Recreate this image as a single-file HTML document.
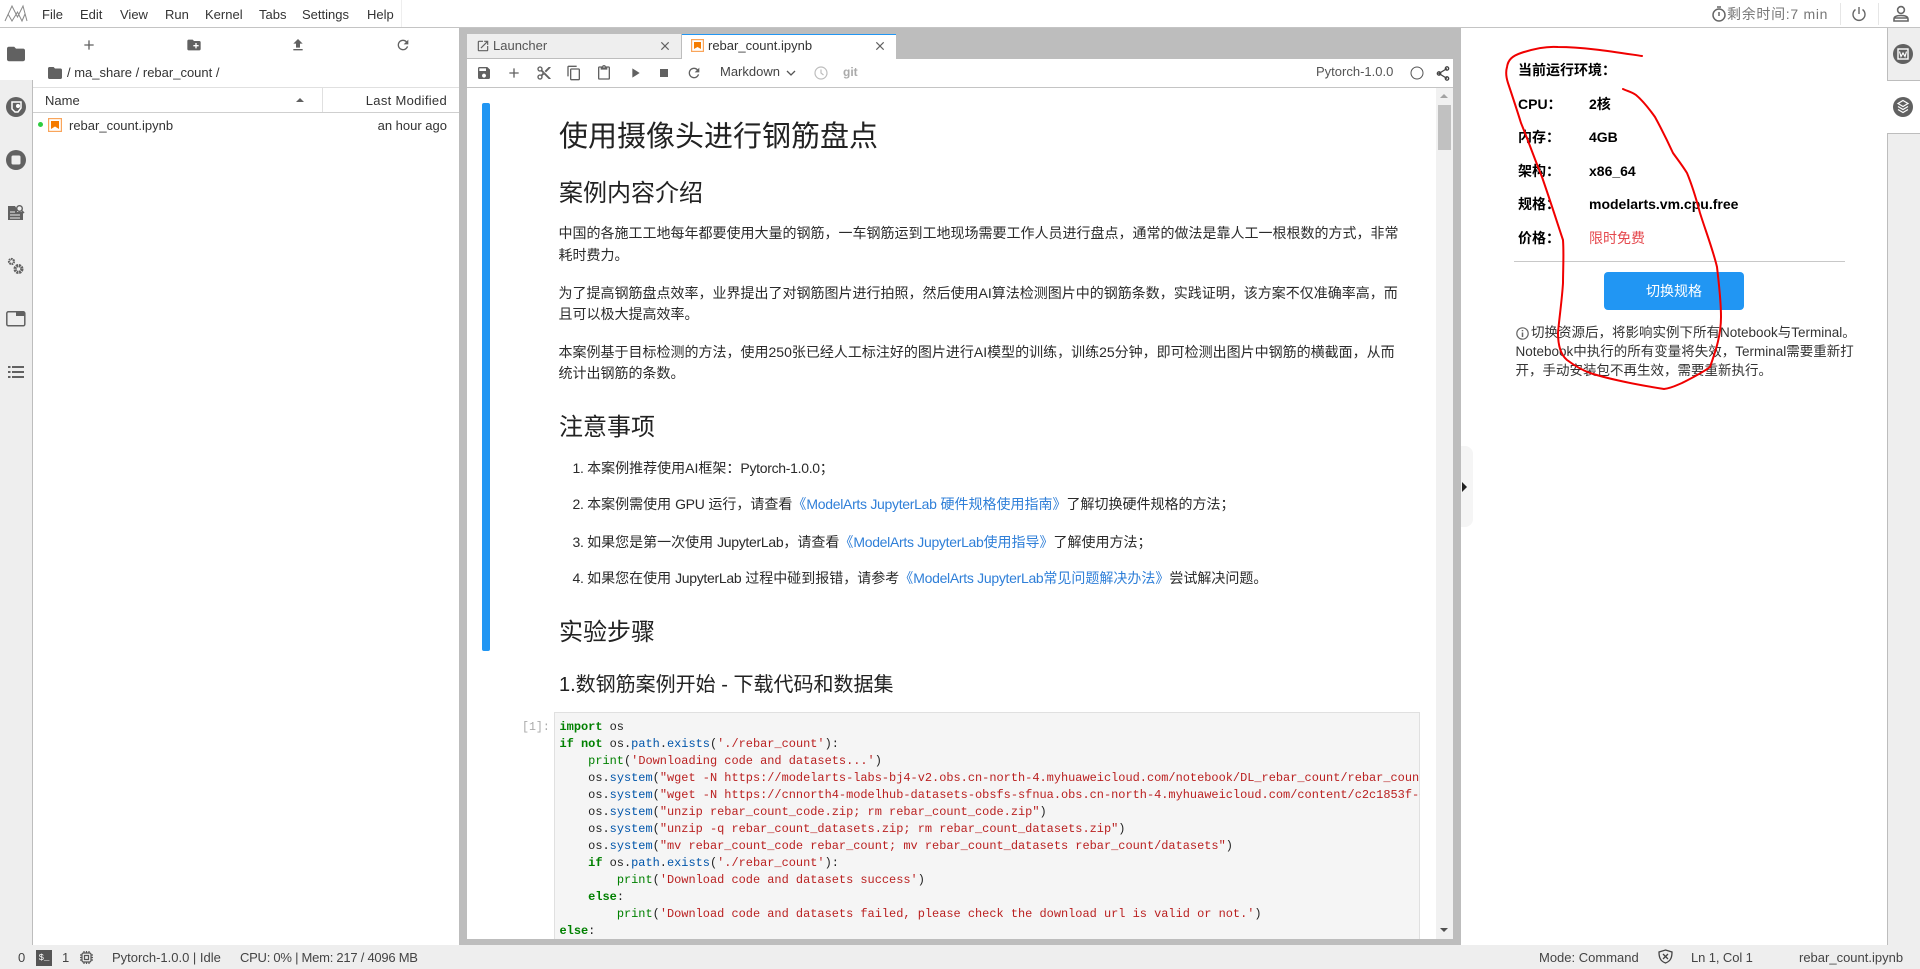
<!DOCTYPE html>
<html lang="zh"><head><meta charset="utf-8"><title>rebar_count.ipynb</title>
<style>
html,body{margin:0;padding:0;width:1920px;height:969px;overflow:hidden;background:#fff}
body{position:relative;font-family:"Liberation Sans","Noto Sans CJK SC",sans-serif;color:#333;font-size:13px}
.b{position:absolute}
.t{position:absolute;white-space:nowrap;line-height:20px;height:20px}
.p{font-size:14px;color:#2a2a2a;left:558.500px}
.h{color:#222;left:559px;line-height:40px;height:40px}
.l{letter-spacing:-.3px}
a{color:#2f7fd8;text-decoration:none}
svg{position:absolute;overflow:visible}
.k{color:#008000;font-weight:bold}.g{color:#008000}.s{color:#ba2121}.u{color:#05a}
pre{position:absolute;margin:0;font:11.95px/17px "Liberation Mono",monospace;color:#222}
</style></head><body>

<!-- top bar -->
<div class="b" style="left:0;top:27px;width:1920px;height:1px;background:#c4c4c4"></div>
<div class="b" style="left:401px;top:0;width:1px;height:27px;background:#eee"></div>
<svg style="left:0;top:0" width="32" height="27" fill="none" stroke="#888" stroke-width="1"><path d="M5 21 12 6 17.500 17 23 6 27 21M8 14 12 21 17.500 12 22 21 25 14"/></svg>
<div class="t" style="left:42px;top:5px">File</div>
<div class="t" style="left:80px;top:5px">Edit</div>
<div class="t" style="left:120px;top:5px">View</div>
<div class="t" style="left:165px;top:5px">Run</div>
<div class="t" style="left:205px;top:5px">Kernel</div>
<div class="t" style="left:259px;top:5px">Tabs</div>
<div class="t" style="left:302px;top:5px">Settings</div>
<div class="t" style="left:367px;top:5px">Help</div>

<svg style="left:1711px;top:5px" width="16" height="18" fill="none" stroke="#666" stroke-width="1.500"><circle cx="8" cy="10" r="6"/><path d="M8 7v4M6 2h4"/></svg>
<div class="t" style="left:1727px;top:4px;font-size:14px;letter-spacing:.7px;color:#777">剩余时间:7 min</div>
<div class="b" style="left:1840px;top:3px;width:1px;height:22px;background:#e6e6e6"></div>
<svg style="left:1851px;top:6px" width="16" height="16" fill="none" stroke="#666" stroke-width="1.400"><path d="M8 1v7M4.500 3.500a6 6 0 1 0 7 0"/></svg>
<div class="b" style="left:1878px;top:3px;width:1px;height:22px;background:#e6e6e6"></div>
<svg style="left:1893px;top:5px" width="16" height="18" fill="none" stroke="#666" stroke-width="1.600"><circle cx="8" cy="5" r="3.400"/><path d="M1 16v-2c0-2 2-3.500 7-3.500s7 1.500 7 3.500v2zM1 13h14"/></svg>

<!-- left sidebar -->
<div class="b" style="left:0;top:80px;width:32px;height:865px;background:#eee"></div>
<div class="b" style="left:32px;top:80px;width:1px;height:865px;background:#bdbdbd"></div>
<svg style="left:7px;top:45px" width="18" height="18" viewBox="2 4 20 16" fill="#616161"><path d="M10 4H4c-1.100 0-1.990.9-1.990 2L2 18c0 1.100.9 2 2 2h16c1.100 0 2-.9 2-2V8c0-1.100-.9-2-2-2h-8l-2-2z"/></svg>
<svg style="left:6px;top:97px" width="20" height="20"><circle cx="10" cy="10" r="10" fill="#616161"/><path d="M6 5h9v6l-3 4H9L6 12z" fill="none" stroke="#fff" stroke-width="1.500"/><circle cx="12" cy="9" r="2" fill="#fff"/></svg>
<svg style="left:6px;top:150px" width="20" height="20"><circle cx="10" cy="10" r="10" fill="#616161"/><rect x="5.500" y="5.500" width="9" height="9" rx="1.500" fill="#eee"/></svg>
<svg style="left:7px;top:204px" width="18" height="18" fill="#616161"><path d="M1 2h7l2 3v3h6v8H1z"/><circle cx="12.500" cy="4.500" r="2.800" fill="#eee" stroke="#616161" stroke-width="1.400"/><path d="M14.500 6.500 17 9" stroke="#616161" stroke-width="1.500"/><path d="M3 8h5M3 11h10M3 14h10" stroke="#eee"/></svg>
<svg style="left:7px;top:257px" width="18" height="19" fill="none" stroke="#616161"><circle cx="4.500" cy="4.500" r="2.500" stroke-width="2.200" stroke-dasharray="1.600 .6"/><circle cx="11.500" cy="12" r="3.400" stroke-width="3.200" stroke-dasharray="2 .7"/></svg>
<svg style="left:6px;top:311px" width="20" height="16" fill="none"><rect x=".8" y=".8" width="18" height="14" rx="1.500" stroke="#616161" stroke-width="1.500"/><rect x="10" y="1" width="9" height="4" fill="#616161"/></svg>
<svg style="left:7px;top:365px" width="18" height="14" fill="#616161"><rect x="1" y="1" width="2.500" height="2"/><rect x="5" y="1" width="12" height="2"/><rect x="1" y="6" width="2.500" height="2"/><rect x="5" y="6" width="12" height="2"/><rect x="1" y="11" width="2.500" height="2"/><rect x="5" y="11" width="12" height="2"/></svg>

<!-- file browser -->
<svg style="left:81px;top:37px" width="16" height="16" viewBox="0 0 24 24" fill="#616161"><path d="M19 13h-6v6h-2v-6H5v-2h6V5h2v6h6v2z"/></svg>
<svg style="left:186px;top:37px" width="16" height="16" viewBox="0 0 24 24" fill="#616161"><path d="M20 6h-8l-2-2H4c-1.110 0-1.990.89-1.990 2L2 18c0 1.110.89 2 2 2h16c1.110 0 2-.89 2-2V8c0-1.110-.89-2-2-2zm-1 8h-3v3h-2v-3h-3v-2h3V9h2v3h3v2z"/></svg>
<svg style="left:290px;top:37px" width="16" height="16" viewBox="0 0 24 24" fill="#616161"><path d="M9 16h6v-6h4l-7-7-7 7h4zm-4 2h14v2H5z"/></svg>
<svg style="left:395px;top:37px" width="16" height="16" viewBox="0 0 24 24" fill="#616161"><path d="M17.650 6.350C16.200 4.900 14.210 4 12 4c-4.420 0-7.990 3.580-7.990 8s3.570 8 7.990 8c3.730 0 6.840-2.550 7.730-6h-2.080c-.82 2.330-3.040 4-5.650 4-3.310 0-6-2.690-6-6s2.690-6 6-6c1.660 0 3.140.69 4.220 1.780L13 11h7V4l-2.350 2.350z"/></svg>
<svg style="left:48px;top:67px" width="14" height="12" viewBox="2 4 20 16" preserveAspectRatio="none" fill="#616161"><path d="M10 4H4c-1.100 0-1.990.9-1.990 2L2 18c0 1.100.9 2 2 2h16c1.100 0 2-.9 2-2V8c0-1.100-.9-2-2-2h-8l-2-2z"/></svg>
<div class="t" style="left:67px;top:63px;font-size:13px">/ ma_share / rebar_count /</div>
<div class="b" style="left:33px;top:87px;width:426px;height:1px;background:#e0e0e0"></div>
<div class="b" style="left:33px;top:112px;width:426px;height:1px;background:#cfcfcf"></div>
<div class="b" style="left:322px;top:88px;width:1px;height:24px;background:#e0e0e0"></div>
<div class="t" style="left:45px;top:91px">Name</div>
<div class="b" style="left:296px;top:98px;border:4.500px solid transparent;border-top:0;border-bottom:4px solid #616161"></div>
<div class="t" style="right:1473px;top:91px;letter-spacing:.3px">Last Modified</div>
<div class="b" style="left:38px;top:122px;width:5px;height:5px;border-radius:50%;background:#2ecc40"></div>
<svg style="left:48px;top:118px" width="14" height="14"><rect x=".6" y=".6" width="12.800" height="12.800" fill="#fff" stroke="#f9a55b" stroke-width="1.200"/><path d="M3 3h8v8L7 8.500 3 11z" fill="#f57c00"/></svg>
<div class="t" style="left:69px;top:116px">rebar_count.ipynb</div>
<div class="t" style="right:1473px;top:116px">an hour ago</div>

<!-- gray work area -->
<div class="b" style="left:459px;top:28px;width:1002px;height:917px;background:#bdbdbd"></div>

<!-- tabs -->
<div class="b" style="left:467px;top:34px;width:214px;height:25px;background:#eee"></div>
<div class="b" style="left:467px;top:58px;width:214px;height:1px;background:#bdbdbd"></div>
<svg style="left:476px;top:39px" width="14" height="14" viewBox="0 0 24 24" fill="#616161"><path d="M19 19H5V5h7V3H5c-1.110 0-2 .9-2 2v14c0 1.100.89 2 2 2h14c1.100 0 2-.9 2-2v-7h-2v7zM14 3v2h3.590l-9.830 9.830 1.410 1.410L19 6.410V10h2V3h-7z"/></svg>
<div class="t" style="left:493px;top:36px;color:#555">Launcher</div>
<svg style="left:658px;top:39px" width="14" height="14" viewBox="0 0 24 24" fill="#616161"><path d="M19 6.410L17.590 5 12 10.590 6.410 5 5 6.410 10.590 12 5 17.590 6.410 19 12 13.410 17.590 19 19 17.590 13.410 12z"/></svg>
<div class="b" style="left:682px;top:34px;width:214px;height:25px;background:#fff;border-top:0"></div>
<div class="b" style="left:682px;top:34px;width:214px;height:1px;background:#2196f3"></div>
<svg style="left:691px;top:39px" width="13" height="13"><rect x=".6" y=".6" width="11.800" height="11.800" fill="#fff" stroke="#f9a55b" stroke-width="1.200"/><path d="M3 3h7v7L6.500 8 3 10z" fill="#f57c00"/></svg>
<div class="t" style="left:708px;top:36px;color:#333">rebar_count.ipynb</div>
<svg style="left:873px;top:39px" width="14" height="14" viewBox="0 0 24 24" fill="#616161"><path d="M19 6.410L17.590 5 12 10.590 6.410 5 5 6.410 10.590 12 5 17.590 6.410 19 12 13.410 17.590 19 19 17.590 13.410 12z"/></svg>

<!-- notebook toolbar -->
<div class="b" style="left:467px;top:59px;width:986px;height:28px;background:#fff"></div>
<div class="b" style="left:467px;top:87px;width:986px;height:1px;background:#c4c4c4"></div>
<svg style="left:476px;top:65px" width="16" height="16" viewBox="0 0 24 24" fill="#616161"><path d="M17 3H5c-1.110 0-2 .9-2 2v14c0 1.100.89 2 2 2h14c1.100 0 2-.9 2-2V7l-4-4zm-5 16c-1.660 0-3-1.340-3-3s1.340-3 3-3 3 1.340 3 3-1.340 3-3 3zm3-10H5V5h10v4z"/></svg>
<svg style="left:506px;top:65px" width="16" height="16" viewBox="0 0 24 24" fill="#616161"><path d="M19 13h-6v6h-2v-6H5v-2h6V5h2v6h6v2z"/></svg>
<svg style="left:536px;top:65px" width="16" height="16" viewBox="0 0 24 24" fill="#616161"><path d="M9.640 7.640c.23-.5.36-1.050.36-1.640 0-2.210-1.790-4-4-4S2 3.790 2 6s1.790 4 4 4c.59 0 1.140-.13 1.640-.36L10 12l-2.360 2.360C7.140 14.130 6.590 14 6 14c-2.210 0-4 1.790-4 4s1.790 4 4 4 4-1.790 4-4c0-.59-.13-1.140-.36-1.640L12 14l7 7h3v-1L9.640 7.640zM6 8c-1.100 0-2-.89-2-2s.9-2 2-2 2 .89 2 2-.9 2-2 2zm0 12c-1.100 0-2-.89-2-2s.9-2 2-2 2 .89 2 2-.9 2-2 2zm6-7.500c-.28 0-.5-.22-.5-.5s.22-.5.5-.5.5.22.5.5-.22.5-.5.5zM19 3l-6 6 2 2 7-7V3h-3z"/></svg>
<svg style="left:566px;top:65px" width="16" height="16" viewBox="0 0 24 24" fill="#616161"><path d="M16 1H4c-1.100 0-2 .9-2 2v14h2V3h12V1zm3 4H8c-1.100 0-2 .9-2 2v14c0 1.100.9 2 2 2h11c1.100 0 2-.9 2-2V7c0-1.100-.9-2-2-2zm0 16H8V7h11v14z"/></svg>
<svg style="left:596px;top:65px" width="16" height="16" viewBox="0 0 24 24" fill="#616161"><path d="M19 2h-4.180C14.400.84 13.300 0 12 0c-1.300 0-2.400.84-2.820 2H5c-1.100 0-2 .9-2 2v16c0 1.100.9 2 2 2h14c1.100 0 2-.9 2-2V4c0-1.100-.9-2-2-2zm-7 0c.55 0 1 .45 1 1s-.45 1-1 1-1-.45-1-1 .45-1 1-1zm7 18H5V4h2v3h10V4h2v16z"/></svg>
<svg style="left:627px;top:65px" width="16" height="16" viewBox="0 0 24 24" fill="#616161"><path d="M8 5v14l11-7z"/></svg>
<svg style="left:656px;top:65px" width="16" height="16" viewBox="0 0 24 24" fill="#616161"><path d="M6 6h12v12H6z"/></svg>
<svg style="left:686px;top:65px" width="16" height="16" viewBox="0 0 24 24" fill="#616161"><path d="M17.650 6.350C16.200 4.900 14.210 4 12 4c-4.420 0-7.990 3.580-7.990 8s3.570 8 7.990 8c3.730 0 6.840-2.550 7.730-6h-2.080c-.82 2.330-3.040 4-5.650 4-3.310 0-6-2.690-6-6s2.690-6 6-6c1.660 0 3.140.69 4.220 1.780L13 11h7V4l-2.350 2.350z"/></svg>
<div class="t" style="left:720px;top:62px;color:#444">Markdown</div>
<svg style="left:786px;top:69px" width="10" height="8" fill="none" stroke="#555" stroke-width="1.300"><path d="M1 2l4 4 4-4"/></svg>
<svg style="left:814px;top:66px" width="14" height="14" fill="none" stroke="#bdbdbd" stroke-width="1.200"><circle cx="7" cy="7" r="6"/><path d="M7 3.500V7l2.500 2"/></svg>
<div class="t" style="left:843px;top:62px;color:#aaa;font-size:12px;font-weight:bold">git</div>
<div class="t" style="left:1316px;top:62px;color:#555">Pytorch-1.0.0</div>
<svg style="left:1410px;top:66px" width="14" height="14" fill="none" stroke="#555" stroke-width="1"><circle cx="7" cy="7" r="6"/></svg>
<svg style="left:1436px;top:66px" width="14" height="15" fill="none" stroke="#444" stroke-width="1.300"><path d="M11 2.500 3 7.500 11 12.500"/><circle cx="11" cy="2.500" r="1.700"/><circle cx="3" cy="7.500" r="1.700"/><circle cx="11" cy="12.500" r="1.700"/></svg>

<!-- notebook content -->
<div class="b" style="left:467px;top:88px;width:986px;height:851px;background:#fff;overflow:hidden">
  <div class="b" style="left:15px;top:15px;width:8px;height:548px;background:#2196f3;border-radius:2px"></div>
  <div class="b" style="left:87px;top:624px;width:866px;height:240px;background:#f5f5f5;border:1px solid #e0e0e0;box-sizing:border-box"></div>
  <div class="b" style="left:969px;top:0;width:17px;height:851px;background:#f1f1f1"></div>
  <div class="b" style="left:971px;top:17px;width:13px;height:45px;background:#c1c1c1"></div>
  <div class="b" style="left:973px;top:6px;border:4px solid transparent;border-top:0;border-bottom:4px solid #a3a3a3"></div>
  <div class="b" style="left:973px;top:840px;border:4px solid transparent;border-bottom:0;border-top:4px solid #505050"></div>
</div>

<div class="t h" style="top:117px;font-size:29px">使用摄像头进行钢筋盘点</div>
<div class="t h" style="top:174px;font-size:24px">案例内容介绍</div>
<div class="t p" style="top:223px">中国的各施工工地每年都要使用大量的钢筋，一车钢筋运到工地现场需要工作人员进行盘点，通常的做法是靠人工一根根数的方式，非常</div>
<div class="t p" style="top:245px">耗时费力。</div>
<div class="t p" style="top:283px">为了提高钢筋盘点效率，业界提出了对钢筋图片进行拍照，然后使用AI算法检测图片中的钢筋条数，实践证明，该方案不仅准确率高，而</div>
<div class="t p" style="top:304px">且可以极大提高效率。</div>
<div class="t p" style="top:342px">本案例基于目标检测的方法，使用250张已经人工标注好的图片进行AI模型的训练，训练25分钟，即可检测出图片中钢筋的横截面，从而</div>
<div class="t p" style="top:363px">统计出钢筋的条数。</div>
<div class="t h" style="top:408px;font-size:24px">注意事项</div>
<div class="t p" style="top:458px;left:572.500px"><span class="l">1. </span>本案例推荐使用AI框架：<span class="l">Pytorch-1.0.0</span>；</div>
<div class="t p" style="top:494px;left:572.500px"><span class="l">2. </span>本案例需使用 <span class="l">GPU</span> 运行，请查看<a>《<span class="l">ModelArts JupyterLab</span> 硬件规格使用指南》</a>了解切换硬件规格的方法；</div>
<div class="t p" style="top:532px;left:572.500px"><span class="l">3. </span>如果您是第一次使用 <span class="l">JupyterLab</span>，请查看<a>《<span class="l">ModelArts JupyterLab</span>使用指导》</a>了解使用方法；</div>
<div class="t p" style="top:568px;left:572.500px"><span class="l">4. </span>如果您在使用 <span class="l">JupyterLab</span> 过程中碰到报错，请参考<a>《<span class="l">ModelArts JupyterLab</span>常见问题解决办法》</a>尝试解决问题。</div>
<div class="t h" style="top:613px;font-size:24px">实验步骤</div>
<div class="t h" style="top:665px;font-size:20px">1.数钢筋案例开始 - 下载代码和数据集</div>

<div class="t" style="left:522px;top:718px;font:11.6px/20px 'Liberation Mono',monospace;color:#aaa">[1]:</div>
<div class="b" style="left:555px;top:713px;width:865px;height:226px;overflow:hidden">
<pre style="left:4.500px;top:6px"><span class="k">import</span> os
<span class="k">if</span> <span class="k">not</span> os.<span class="u">path</span>.<span class="u">exists</span>(<span class="s">'./rebar_count'</span>):
    <span class="g">print</span>(<span class="s">'Downloading code and datasets...'</span>)
    os.<span class="u">system</span>(<span class="s">"wget -N https://modelarts-labs-bj4-v2.obs.cn-north-4.myhuaweicloud.com/notebook/DL_rebar_count/rebar_count_code.zip"</span>)
    os.<span class="u">system</span>(<span class="s">"wget -N https://cnnorth4-modelhub-datasets-obsfs-sfnua.obs.cn-north-4.myhuaweicloud.com/content/c2c1853f-d6a6-4c9d"</span>)
    os.<span class="u">system</span>(<span class="s">"unzip rebar_count_code.zip; rm rebar_count_code.zip"</span>)
    os.<span class="u">system</span>(<span class="s">"unzip -q rebar_count_datasets.zip; rm rebar_count_datasets.zip"</span>)
    os.<span class="u">system</span>(<span class="s">"mv rebar_count_code rebar_count; mv rebar_count_datasets rebar_count/datasets"</span>)
    <span class="k">if</span> os.<span class="u">path</span>.<span class="u">exists</span>(<span class="s">'./rebar_count'</span>):
        <span class="g">print</span>(<span class="s">'Download code and datasets success'</span>)
    <span class="k">else</span>:
        <span class="g">print</span>(<span class="s">'Download code and datasets failed, please check the download url is valid or not.'</span>)
<span class="k">else</span>:</pre>
</div>

<!-- right panel -->
<div class="b" style="left:1461px;top:446px;width:12px;height:81px;background:#f5f5f5;border-radius:0 8px 8px 0"></div>
<div class="b" style="left:1462px;top:482px;border:5px solid transparent;border-right:0;border-left:5px solid #222"></div>
<div class="b" style="left:1887px;top:28px;width:33px;height:917px;background:#eee;border-left:1px solid #bdbdbd;box-sizing:border-box"></div>
<div class="b" style="left:1887px;top:80px;width:33px;height:1px;background:#bdbdbd"></div>
<div class="b" style="left:1887px;top:133px;width:33px;height:1px;background:#bdbdbd"></div>
<div class="b" style="left:1887px;top:81px;width:33px;height:52px;background:#fff"></div>
<svg style="left:1893px;top:44px" width="20" height="20"><circle cx="10" cy="10" r="10" fill="#616161"/><rect x="5" y="5" width="10" height="10" fill="none" stroke="#fff" stroke-width="1.400"/><path d="M6.500 7.500 8 12.500 10 9 12 12.500 13.500 7.500" fill="none" stroke="#fff" stroke-width="1.200"/></svg>
<svg style="left:1893px;top:97px" width="20" height="20"><circle cx="10" cy="10" r="10" fill="#616161"/><path d="M10 3.500 15 6.500 10 9.500 5 6.500zM5 9.500 10 12.500 15 9.500M5 12.500 10 15.500 15 12.500" fill="none" stroke="#fff" stroke-width="1.200"/></svg>

<div class="t" style="left:1518px;top:60px;font-size:14px;font-weight:bold;color:#000">当前运行环境：</div>
<div class="t" style="left:1518px;top:94px;font-size:14px;font-weight:bold;color:#000">CPU：</div>
<div class="t" style="left:1589px;top:94px;font-size:14px;font-weight:bold;color:#000">2核</div>
<div class="t" style="left:1518px;top:127px;font-size:14px;font-weight:bold;color:#000">内存：</div>
<div class="t" style="left:1589px;top:127px;font-size:14px;font-weight:bold;color:#000">4GB</div>
<div class="t" style="left:1518px;top:161px;font-size:14px;font-weight:bold;color:#000">架构：</div>
<div class="t" style="left:1589px;top:161px;font-size:14px;font-weight:bold;color:#000">x86_64</div>
<div class="t" style="left:1518px;top:194px;font-size:14px;font-weight:bold;color:#000">规格：</div>
<div class="t" style="left:1589px;top:194px;font-size:14px;font-weight:bold;color:#000">modelarts.vm.cpu.free</div>
<div class="t" style="left:1518px;top:228px;font-size:14px;font-weight:bold;color:#000">价格：</div>
<div class="t" style="left:1589px;top:228px;font-size:14px;color:#e5484d">限时免费</div>
<div class="b" style="left:1514px;top:261px;width:331px;height:1px;background:#c8c8c8"></div>
<div class="b" style="left:1604px;top:272px;width:140px;height:38px;background:#2196f3;border-radius:4px;color:#fff;font-size:14px;line-height:38px;text-align:center">切换规格</div>
<svg style="left:1516px;top:327px" width="13" height="13" fill="none" stroke="#666" stroke-width="1.200"><circle cx="6.500" cy="6.500" r="5.700"/><path d="M6.500 5.500V10M6.500 3v1.300" stroke-width="1.500"/></svg>
<div class="t" style="left:1531px;top:323px;font-size:13.500px;color:#333">切换资源后，将影响实例下所有Notebook与Terminal。</div>
<div class="t" style="left:1515.500px;top:342px;font-size:13.500px;color:#333">Notebook中执行的所有变量将失效，Terminal需要重新打</div>
<div class="t" style="left:1515.500px;top:361px;font-size:13.500px;color:#333">开，手动安装包不再生效，需要重新执行。</div>

<!-- red annotation -->
<svg style="left:0;top:0;pointer-events:none" width="1920" height="969" fill="none" stroke="#f00000" stroke-width="2" stroke-linecap="round" stroke-linejoin="round"><path d="M1642 56C1615 52 1585 47 1558 47C1545 46 1530 50 1521 53C1512 56 1508 60 1507 67C1505 74 1507 80 1508 83C1512 95 1517 110 1521 123C1528 140 1535 160 1542 177C1550 200 1558 225 1563 240C1564 255 1563 270 1563 283C1562 300 1559 320 1558 333C1558 345 1561 355 1567 360C1575 366 1582 370 1590 373C1615 381 1645 386 1664 389C1672 388 1677 385 1682 383C1692 378 1702 373 1710 367C1716 350 1721 335 1721 317C1721 300 1719 285 1717 267C1713 250 1706 232 1700 213C1696 198 1692 185 1687 173C1682 165 1678 160 1673 153C1667 140 1661 128 1655 117C1650 110 1642 100 1636 95C1632 92 1627 91 1623 89"/></svg>

<!-- status bar -->
<div class="b" style="left:0;top:945px;width:1920px;height:24px;background:#eee"></div>
<div class="t" style="left:18px;top:948px;color:#444">0</div>
<div class="b" style="left:36px;top:950px;width:16px;height:16px;background:#555;color:#fff;font:9px/17px 'Liberation Mono',monospace;text-align:center">$_</div>
<div class="t" style="left:62px;top:948px;color:#444">1</div>
<svg style="left:79px;top:950px" width="15" height="15" fill="none" stroke="#555" stroke-width="1.200"><rect x="3" y="3" width="9" height="9" rx="1.500"/><rect x="5.500" y="5.500" width="4" height="4"/><path d="M5 1v2M7.500 1v2M10 1v2M5 12v2M7.500 12v2M10 12v2M1 5h2M1 7.500h2M1 10h2M12 5h2M12 7.500h2M12 10h2"/></svg>
<div class="t" style="left:112px;top:948px;color:#444">Pytorch-1.0.0 | Idle</div>
<div class="t" style="left:240px;top:948px;color:#444;letter-spacing:-.25px">CPU: 0% | Mem: 217 / 4096 MB</div>
<div class="t" style="left:1539px;top:948px;color:#444">Mode: Command</div>
<svg style="left:1658px;top:949px" width="15" height="15" fill="none" stroke="#444" stroke-width="1.300"><path d="M7.500 1 14 3c0 5-1 9-6.500 11C2 12 1 8 1 3z"/><path d="M5 5l5 5M10 5l-5 5"/></svg>
<div class="t" style="left:1691px;top:948px;color:#444;letter-spacing:-.1px">Ln 1, Col 1</div>
<div class="t" style="left:1799px;top:948px;color:#444">rebar_count.ipynb</div>
</body></html>
